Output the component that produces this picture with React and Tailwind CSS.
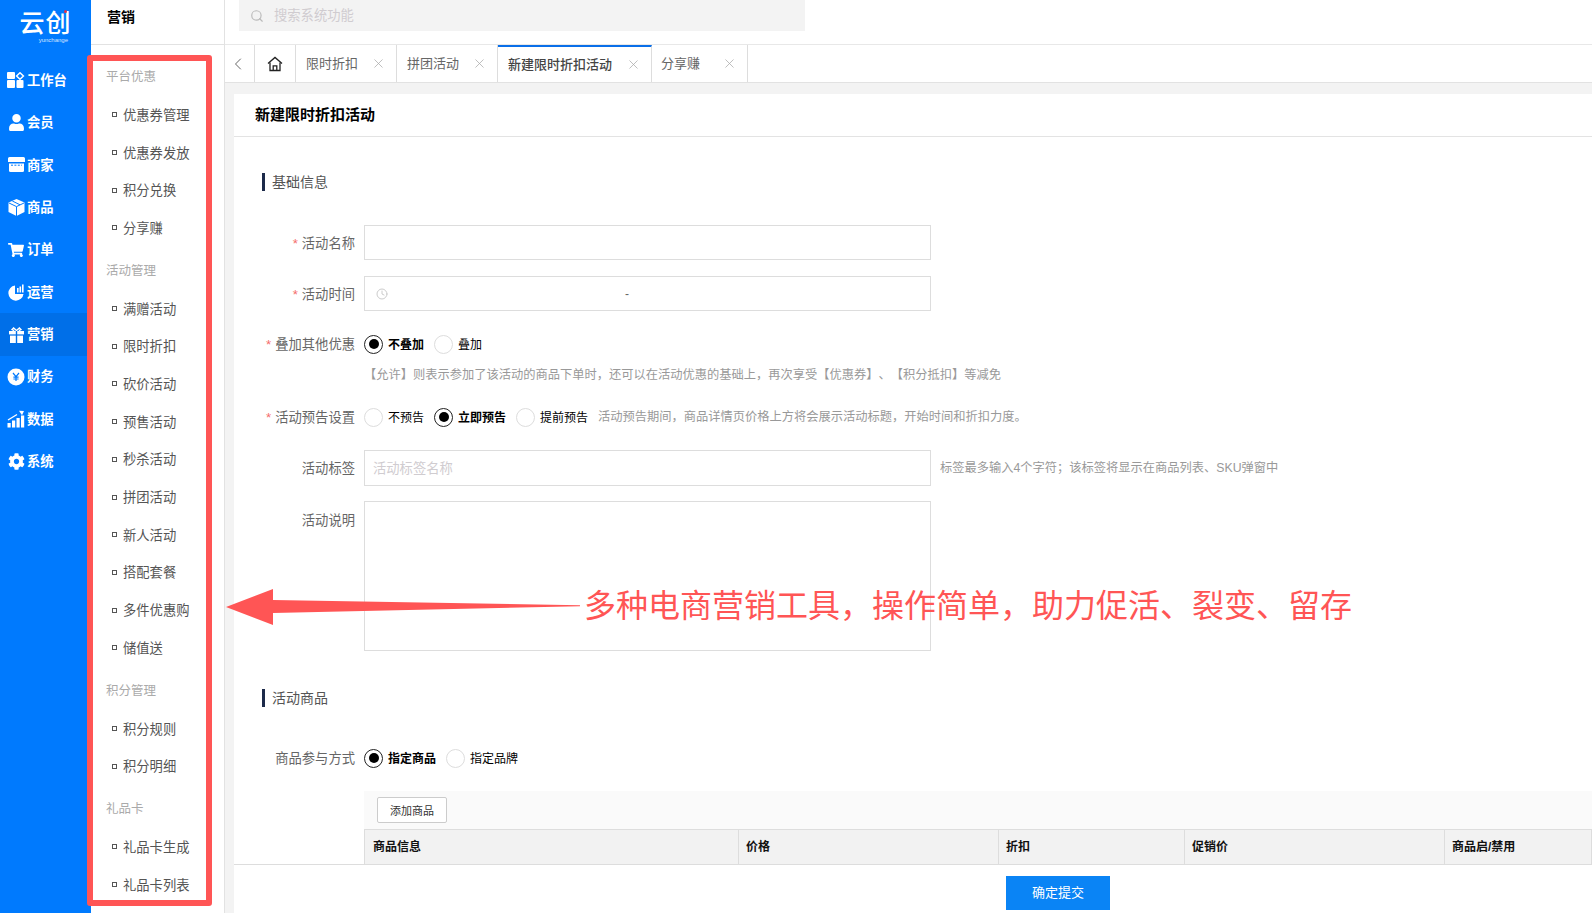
import { Search, Clock, ChevronLeft, X } from 'lucide-react';
import { FaUser, FaShoppingCart, FaCog } from 'react-icons/fa';

const IconDesk = () => (
  <svg width="18" height="16" viewBox="0 0 18 16" fill="white">
    <rect x="0" y="0" width="8" height="7" rx="1" />
    <rect x="0" y="8" width="8" height="8" rx="1" />
    <rect x="9.5" y="8" width="7" height="8" rx="1" />
    <path d="M13 .8 16.4 4 13 7.2 9.6 4Z" fill="none" stroke="white" strokeWidth="1.5" />
  </svg>
);

const IconShop = () => (
  <svg width="17" height="15" viewBox="0 0 17 15" fill="white">
    <path d="M1.5 0h14A1.5 1.5 0 0 1 17 1.5V5H0V1.5A1.5 1.5 0 0 1 1.5 0Z" />
    <path d="M1 6.5h15V13.5A1.5 1.5 0 0 1 14.5 15h-12A1.5 1.5 0 0 1 1 13.5Z" />
    <path d="M3 8.2h11" stroke="#007afe" strokeWidth="1" strokeDasharray="2 1.4" />
  </svg>
);

const IconCube = () => (
  <svg width="17" height="17" viewBox="0 0 17 17">
    <path d="M8.5 0 16.5 3.6V13L8.5 17 .5 13V3.6Z" fill="white" />
    <path d="M.8 3.9 8.5 7.6l7.7-3.7M8.5 7.6V17M4.3 2 12 5.8" stroke="#007afe" strokeWidth="1" fill="none" />
  </svg>
);

const IconPie = () => (
  <svg width="17" height="17" viewBox="0 0 17 17" fill="white">
    <path d="M7 1.5v8.5h8.5A7.6 7.6 0 1 1 7 1.5Z" />
    <rect x="9" y="4" width="1.6" height="4.5" />
    <rect x="11.5" y="2.5" width="1.6" height="6" />
    <rect x="14" y="0.5" width="1.6" height="8" />
  </svg>
);

const IconGift = () => (
  <svg width="15" height="16" viewBox="0 0 15 16" fill="white">
    <rect x="0" y="4" width="6.8" height="3.4" />
    <rect x="8.2" y="4" width="6.8" height="3.4" />
    <rect x="1" y="8.6" width="5.8" height="7.4" />
    <rect x="8.2" y="8.6" width="5.8" height="7.4" />
    <path d="M7.5 3.6 4.6.9 3 2.6 5.2 3.6M7.5 3.6 10.4.9 12 2.6 9.8 3.6" fill="none" stroke="white" strokeWidth="1.3" />
  </svg>
);

const IconYen = () => (
  <svg width="18" height="18" viewBox="0 0 18 18">
    <circle cx="9" cy="9" r="8.5" fill="white" />
    <path d="M6 5l3 3.6L12 5M9 8.6V13M6.4 9.2h5.2M6.4 11h5.2" stroke="#007afe" strokeWidth="1.2" fill="none" />
  </svg>
);

const IconChart = () => (
  <svg width="18" height="18" viewBox="0 0 18 18" fill="white">
    <rect x="0.5" y="13" width="3.2" height="4.5" />
    <rect x="5" y="10.5" width="3.2" height="7" />
    <rect x="9.5" y="8" width="3.2" height="9.5" />
    <rect x="14" y="5.5" width="3.2" height="12" />
    <path d="M1 10 10 4.5" stroke="white" strokeWidth="1.4" />
    <path d="M12 0.8 17 1 15 5.2Z" />
  </svg>
);

const IconHome = () => (
  <svg width="16" height="16" viewBox="0 0 16 16" fill="none" stroke="#222" strokeWidth="1.3">
    <path d="M1 7.6 8 1.4l7 6.2" />
    <path d="M3 6.4v8.1h10V6.4" />
    <path d="M6.2 14.5v-4.6h3.6v4.6" />
  </svg>
);

const mainMenu = [
  { label: '工作台', icon: <IconDesk /> },
  { label: '会员', icon: <FaUser size={17} color="white" /> },
  { label: '商家', icon: <IconShop /> },
  { label: '商品', icon: <IconCube /> },
  { label: '订单', icon: <FaShoppingCart size={16} color="white" /> },
  { label: '运营', icon: <IconPie /> },
  { label: '营销', icon: <IconGift />, active: true },
  { label: '财务', icon: <IconYen /> },
  { label: '数据', icon: <IconChart /> },
  { label: '系统', icon: <FaCog size={17} color="white" /> },
];

const subMenu = [
  { title: '平台优惠', items: ['优惠券管理', '优惠券发放', '积分兑换', '分享赚'] },
  { title: '活动管理', items: ['满赠活动', '限时折扣', '砍价活动', '预售活动', '秒杀活动', '拼团活动', '新人活动', '搭配套餐', '多件优惠购', '储值送'] },
  { title: '积分管理', items: ['积分规则', '积分明细'] },
  { title: '礼品卡', items: ['礼品卡生成', '礼品卡列表'] },
];

const tabs = [
  { label: '限时折扣', w: 'w-[101px] pl-[10px]' },
  { label: '拼团活动', w: 'w-[101px] pl-[10px]' },
  { label: '新建限时折扣活动', w: 'w-[154px] pl-[10px]', active: true },
  { label: '分享赚', w: 'w-[96px] pl-[9px]' },
];

const columns = [
  { label: '商品信息', w: 'w-[374px] pl-[8px]' },
  { label: '价格', w: 'w-[260px] pl-[7px]' },
  { label: '折扣', w: 'w-[186px] pl-[7px]' },
  { label: '促销价', w: 'w-[260px] pl-[7px]' },
  { label: '商品启/禁用', w: 'flex-1 pl-[7px]' },
];

const Radio = ({ label, checked, className = '' }) => (
  <div className={`flex items-center gap-[5px] ${className}`}>
    <span className={`w-[19px] h-[19px] rounded-full border flex items-center justify-center bg-white ${checked ? 'border-[#222]' : 'border-[#ddd]'}`}>
      {checked && <span className="w-[10px] h-[10px] rounded-full bg-black" />}
    </span>
    <span className={`pt-[1px] text-xs text-black ${checked ? 'font-bold' : ''}`}>{label}</span>
  </div>
);

const Label = ({ required, low, children }) => (
  <div className={`w-[121px] shrink-0 text-right text-[13.3px] text-[#666] leading-5 ${low ? 'pt-[3px]' : 'pt-[1px]'}`}>
    {required && <span className="text-[#f56c6c] mr-1">*</span>}
    {children}
  </div>
);

const SectionTitle = ({ children, className = '' }) => (
  <div className={`ml-[28px] h-[18px] border-l-[3px] border-[#1c2a4a] pl-[7px] text-sm text-[#555] leading-[18px] ${className}`}>
    {children}
  </div>
);

export default function App() {
  return (
    <div className="relative flex h-screen w-full overflow-hidden bg-[#f3f3f3] [text-spacing-trim:space-all] [font-kerning:none] font-['Liberation_Sans','Noto_Sans_CJK_SC',sans-serif]">
      {/* main nav */}
      <div className="w-[91px] shrink-0 bg-[#007afe] text-white">
        <div className="relative h-[59px] flex flex-col items-center pt-[9px]">
          <div className="text-[25px] leading-[28px] tracking-[1px] font-medium">云创</div>
          <div className="text-[6px] leading-[6px] self-end pr-[23px] opacity-80">yunchange</div>
          <span className="absolute left-[64px] top-[10px] w-[3px] h-[3px] rounded-full bg-[#e0304a]" />
        </div>
        {mainMenu.map(m => (
          <div key={m.label} className={`flex items-center h-[42.4px] pl-[7px] ${m.active ? 'bg-[#006fe8]' : ''}`}>
            <span className="w-[18px] flex justify-center">{m.icon}</span>
            <span className="ml-[2px] pt-[1px] text-[13.3px] font-bold">{m.label}</span>
          </div>
        ))}
      </div>

      {/* sub nav */}
      <div className="w-[134px] shrink-0 bg-white border-r border-[#e2e2e2]">
        <div className="h-[45px] border-b border-[#e2e2e2] pl-[16px] pt-[6px] text-sm font-bold text-black leading-[22px]">营销</div>
        <div className="pt-[11px]">
          {subMenu.map(g => (
            <div key={g.title} className="mb-[3px]">
              <div className="h-[40px] pl-[15px] pt-[3px] flex items-center text-[12.5px] text-[#aaa]">{g.title}</div>
              {g.items.map(item => (
                <div key={item} className="h-[37.7px] pl-[21px] flex items-center text-[13.3px] text-[#555]">
                  <span className="w-[5px] h-[5px] border border-[#555] mr-[6px]" />
                  <span className="pt-[2px]">{item}</span>
                </div>
              ))}
            </div>
          ))}
        </div>
      </div>

      <div className="flex-1 min-w-0 flex flex-col">
        {/* search bar */}
        <div className="h-[45px] shrink-0 bg-white border-b border-[#e8e8e8] pl-[14px]">
          <div className="w-[566px] h-[31px] bg-[#f3f3f3] flex items-center pl-[11px]">
            <Search size={14} color="#bbb" />
            <span className="ml-[10px] text-[13.3px] text-[#d0ccd0]">搜索系统功能</span>
          </div>
        </div>

        {/* tabs */}
        <div className="h-[38px] shrink-0 bg-white border-b border-[#e2e2e2] flex">
          <div className="w-[30px] flex items-center justify-center border-r border-[#ddd] pr-[3px]">
            <ChevronLeft size={20} color="#666" strokeWidth={1.2} />
          </div>
          <div className="w-[41px] flex items-center justify-center border-r border-[#ddd]">
            <IconHome />
          </div>
          {tabs.map(t => (
            <div key={t.label} className={`${t.w} flex items-center justify-between pr-[10px] border-r border-[#ddd] text-[13px] ${t.active ? 'border-t-2 border-t-[#0a6fe8] text-[#444] font-medium' : 'text-[#666]'}`}>
              <span>{t.label}</span>
              <X size={15} color="#aaa" strokeWidth={1.2} />
            </div>
          ))}
        </div>

        {/* card */}
        <div className="flex-1 mt-[11px] ml-[9px] bg-white">
          <div className="h-[43px] border-b border-[#e3e3e3] pl-[21px] flex items-center text-[15px] font-bold text-black">新建限时折扣活动</div>

          <SectionTitle className="mt-[36px]">基础信息</SectionTitle>

          <div className="flex items-center gap-[9px] mt-[34px]">
            <Label required low>活动名称</Label>
            <div className="w-[567px] h-[35px] border border-[#ddd]" />
          </div>

          <div className="flex items-center gap-[9px] mt-[16px]">
            <Label required low>活动时间</Label>
            <div className="w-[567px] h-[35px] border border-[#ddd] flex items-center pl-[11px] text-xs text-[#666]">
              <Clock size={12} color="#ccc" />
              <span className="ml-[237px]">-</span>
            </div>
          </div>

          <div className="flex items-center gap-[9px] mt-[23px] h-[20px]">
            <Label required>叠加其他优惠</Label>
            <Radio label="不叠加" checked />
            <Radio label="叠加" className="ml-[1px]" />
          </div>

          <div className="ml-[130px] mt-[13px] h-[15px] text-[12.25px] leading-4 text-[#999] whitespace-nowrap">
            【允许】则表示参加了该活动的商品下单时，还可以在活动优惠的基础上，再次享受【优惠券】、【积分抵扣】等减免
          </div>

          <div className="flex items-center gap-[9px] mt-[25px] h-[20px]">
            <Label required>活动预告设置</Label>
            <Radio label="不预告" />
            <Radio label="立即预告" checked className="ml-[1px]" />
            <Radio label="提前预告" className="ml-[1px]" />
            <span className="ml-[1px] pt-[1px] text-[12.25px] text-[#999]">活动预告期间，商品详情页价格上方将会展示活动标题，开始时间和折扣力度。</span>
          </div>

          <div className="flex items-center gap-[9px] mt-[23px]">
            <Label>活动标签</Label>
            <div className="w-[567px] h-[36px] border border-[#ddd] pl-[8px] pt-[1px] flex items-center text-[13.3px] text-[#d0ccd0]">活动标签名称</div>
            <span className="pt-[1px] text-[12.25px] text-[#999]">标签最多输入4个字符；该标签将显示在商品列表、SKU弹窗中</span>
          </div>

          <div className="flex items-start gap-[9px] mt-[15px]">
            <div className="pt-[9px]"><Label>活动说明</Label></div>
            <div className="w-[567px] h-[150px] border border-[#ddd]" />
          </div>

          <SectionTitle className="mt-[38px]">活动商品</SectionTitle>

          <div className="flex items-center gap-[9px] mt-[41px] h-[20px]">
            <Label>商品参与方式</Label>
            <Radio label="指定商品" checked />
            <Radio label="指定品牌" className="ml-[1px]" />
          </div>

          <div className="mt-[23px] border-b border-[#ddd]">
            <div className="ml-[130px] h-[38px] bg-[#fafafa] pl-[13px] pt-[6px]">
              <div className="w-[70px] h-[26px] pt-[2px] bg-white border border-[#ccc] rounded-[2px] flex items-center justify-center text-[11px] text-[#333]">添加商品</div>
            </div>
            <div className="ml-[130px] h-[35px] flex bg-[#f2f2f2] border-t border-l border-[#ddd]">
              {columns.map(c => (
                <div key={c.label} className={`${c.w} border-r border-[#ddd] flex items-center text-xs font-bold text-[#111]`}>{c.label}</div>
              ))}
            </div>
          </div>

          <div className="mt-[11px] ml-[772px] w-[104px] h-[34px] bg-[#0a84f5] text-white text-[13px] flex items-center justify-center">确定提交</div>
        </div>
      </div>

      {/* annotation overlay */}
      <div className="absolute left-[87px] top-[55px] w-[125px] h-[851px] border-[6px] border-[#ff5555] rounded-[3px]" />
      <svg className="absolute left-[220px] top-[580px]" width="370" height="50" viewBox="220 580 370 50">
        <polygon points="226,607 273,589 273,600 580,605.3 580,606.3 273,613 273,625" fill="#ff5555" />
      </svg>
      <div className="absolute left-[584px] top-[583px] text-[32px] leading-[46px] text-[#ff5555] whitespace-nowrap">多种电商营销工具，操作简单，助力促活、裂变、留存</div>
    </div>
  );
}
